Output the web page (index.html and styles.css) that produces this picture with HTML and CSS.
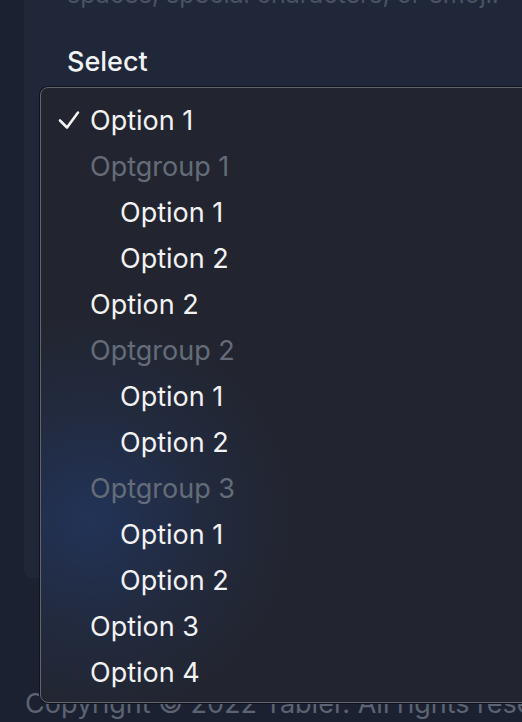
FILE: index.html
```html
<!DOCTYPE html>
<html>
<head>
<meta charset="utf-8">
<link rel="stylesheet" href="styles.css">
</head>
<body>
<div class="page">
  <div class="card">
    <p class="hint">spaces, special characters, or emoji.</p>
    <label class="label">Select</label>
    <div class="select-box"></div>
  </div>
  <footer class="footer">Copyright © 2022 Tabler. All rights reserved.</footer>

  <div class="popup">
    <div class="glow"></div>
    <ul class="menu">
      <li class="opt top checked"><svg class="check" width="24" height="20" viewBox="0 0 24 20"><path d="M3 10.5 L10 17.5 L21 2.5" fill="none" stroke="#f2f2f2" stroke-width="2.6" stroke-linecap="round" stroke-linejoin="round"/></svg>Option 1</li>
      <li class="opt group">Optgroup 1</li>
      <li class="opt sub">Option 1</li>
      <li class="opt sub">Option 2</li>
      <li class="opt top">Option 2</li>
      <li class="opt group">Optgroup 2</li>
      <li class="opt sub">Option 1</li>
      <li class="opt sub">Option 2</li>
      <li class="opt group">Optgroup 3</li>
      <li class="opt sub">Option 1</li>
      <li class="opt sub">Option 2</li>
      <li class="opt top">Option 3</li>
      <li class="opt top">Option 4</li>
    </ul>
  </div>
</div>
</body>
</html>
```
FILE: styles.css
```css
html, body {
  margin: 0;
  padding: 0;
}
body {
  width: 522px;
  height: 722px;
  overflow: hidden;
  background: #1b2131;
  font-family: Inter, "Noto Sans", sans-serif;
}
.page {
  position: relative;
  width: 522px;
  height: 722px;
  display: flex;
  flex-direction: column;
}
.card {
  margin-left: 24px;
  height: 578px;
  background: #1f2739;
  border-bottom-left-radius: 8px;
  padding-left: 43px;
  box-sizing: border-box;
  display: flex;
  flex-direction: column;
}
.hint {
  margin: -20px 0 0 0;
  font-size: 25px;
  line-height: 28px;
  color: #4a5263;
  white-space: nowrap;
}
.label {
  margin-top: 39px;
  font-size: 27px;
  line-height: 30px;
  color: #f1f2f4;
  font-weight: 500;
}
.select-box {
  margin-top: 10px;
  height: 50px;
}
.footer {
  margin-top: auto;
  padding-left: 25px;
  height: 40px;
  line-height: 44px;
  font-size: 27px;
  color: #5c6372;
  white-space: nowrap;
}
.popup {
  position: absolute;
  left: 40px;
  top: 87px;
  width: 620px;
  height: 616px;
  box-sizing: border-box;
  border: 1px solid #62656d;
  border-radius: 8px;
  background: #22252f;
  box-shadow: 0 0 0 1px #10131a;
  overflow: hidden;
}
.glow {
  position: absolute;
  left: -160px;
  top: 220px;
  width: 420px;
  height: 420px;
  background: radial-gradient(circle at center, rgba(34, 52, 90, 0.95) 0%, rgba(34, 48, 80, 0.5) 35%, rgba(34, 37, 47, 0) 70%);
}
.menu {
  position: relative;
  list-style: none;
  margin: 0;
  padding: 10px 0 8px 0;
}
.opt {
  height: 46px;
  line-height: 46px;
  font-size: 27px;
  color: #f2f2f3;
  padding-left: 49px;
  position: relative;
  white-space: nowrap;
}
.opt.sub {
  padding-left: 79px;
}
.opt.group {
  color: #656c79;
}
.check {
  position: absolute;
  left: 16px;
  top: 12px;
}
```
